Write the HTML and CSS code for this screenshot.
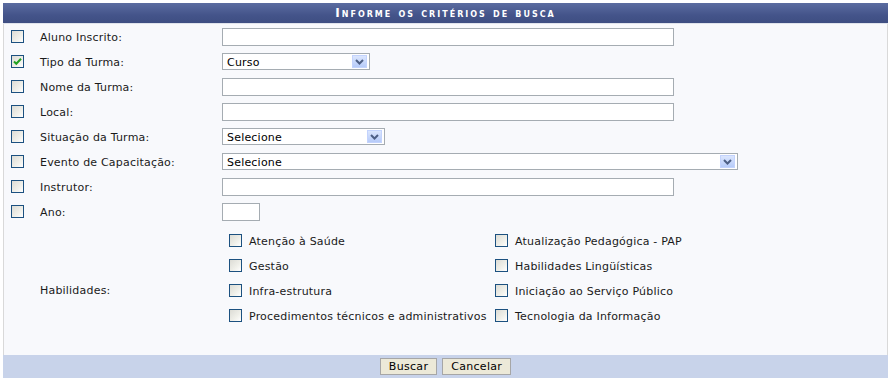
FILE: index.html
```html
<!DOCTYPE html>
<html lang="pt-BR">
<head>
<meta charset="utf-8">
<title>Informe os critérios de busca</title>
<link rel="stylesheet" href="styles.css">
</head>
<body>
<div class="panel">
  <div class="caption">Informe os critérios de busca</div>
  <div class="body">
    <div class="row">
      <span class="cb"></span><span class="lbl">Aluno Inscrito:</span>
      <div class="field"><span class="text w452"></span></div>
    </div>
    <div class="row">
      <span class="cb checked"><svg width="11" height="11" viewBox="0 0 11 11"><path d="M2 5.5 L4.3 7.8 L9 2.8" fill="none" stroke="#21a121" stroke-width="2"/></svg></span><span class="lbl">Tipo da Turma:</span>
      <div class="field"><span class="select w148"><span class="val">Curso</span><span class="arrow"><svg width="9" height="6" viewBox="0 0 9 6"><path d="M1 1 L4.5 4.5 L8 1" fill="none" stroke="#4d5f85" stroke-width="2"/></svg></span></span></div>
    </div>
    <div class="row">
      <span class="cb"></span><span class="lbl">Nome da Turma:</span>
      <div class="field"><span class="text w452"></span></div>
    </div>
    <div class="row">
      <span class="cb"></span><span class="lbl">Local:</span>
      <div class="field"><span class="text w452"></span></div>
    </div>
    <div class="row">
      <span class="cb"></span><span class="lbl">Situação da Turma:</span>
      <div class="field"><span class="select w163"><span class="val">Selecione</span><span class="arrow"><svg width="9" height="6" viewBox="0 0 9 6"><path d="M1 1 L4.5 4.5 L8 1" fill="none" stroke="#4d5f85" stroke-width="2"/></svg></span></span></div>
    </div>
    <div class="row">
      <span class="cb"></span><span class="lbl">Evento de Capacitação:</span>
      <div class="field"><span class="select w516"><span class="val">Selecione</span><span class="arrow"><svg width="9" height="6" viewBox="0 0 9 6"><path d="M1 1 L4.5 4.5 L8 1" fill="none" stroke="#4d5f85" stroke-width="2"/></svg></span></span></div>
    </div>
    <div class="row">
      <span class="cb"></span><span class="lbl">Instrutor:</span>
      <div class="field"><span class="text w452"></span></div>
    </div>
    <div class="row">
      <span class="cb"></span><span class="lbl">Ano:</span>
      <div class="field"><span class="text w38"></span></div>
    </div>
    <div class="row hab">
      <span class="cbcell"></span><span class="lbl">Habilidades:</span>
      <div class="field">
        <div class="habgrid">
          <div class="opt"><span class="cb"></span><span class="otxt">Atenção à Saúde</span></div>
          <div class="opt"><span class="cb"></span><span class="otxt">Atualização Pedagógica - PAP</span></div>
          <div class="opt"><span class="cb"></span><span class="otxt">Gestão</span></div>
          <div class="opt"><span class="cb"></span><span class="otxt">Habilidades Lingüísticas</span></div>
          <div class="opt"><span class="cb"></span><span class="otxt">Infra-estrutura</span></div>
          <div class="opt"><span class="cb"></span><span class="otxt">Iniciação ao Serviço Público</span></div>
          <div class="opt"><span class="cb"></span><span class="otxt">Procedimentos técnicos e administrativos</span></div>
          <div class="opt"><span class="cb"></span><span class="otxt">Tecnologia da Informação</span></div>
        </div>
      </div>
    </div>
  </div>
  <div class="foot">
    <button class="btn">Buscar</button>
    <button class="btn">Cancelar</button>
  </div>
</div>
</body>
</html>
```

FILE: styles.css
```css
html, body {
  margin: 0;
  padding: 0;
  background: #ffffff;
}
body {
  padding: 3px;
  font-family: "DejaVu Sans", Verdana, sans-serif;
  font-size: 11px;
  letter-spacing: 0.2px;
  color: #1a1a1a;
}
.panel {
  width: 885px;
}
.caption {
  height: 20px;
  line-height: 21px;
  text-align: center;
  color: #ffffff;
  font-weight: bold;
  font-variant: small-caps;
  letter-spacing: 2px;
  font-size: 12px;
  background: linear-gradient(#5b6ca0, #44548a 60%, #3e4e82);
  border-bottom: 1px solid #dfe3ec;
}
.body {
  background: #f8f9fc;
  border-left: 1px solid #d9d9d9;
  border-right: 1px solid #d9d9d9;
}
.row {
  display: grid;
  grid-template-columns: 36px 182px 1fr;
  height: 25px;
  align-items: center;
}
.row > .cb {
  margin-left: 7px;
}
.lbl, .otxt, .val {
  padding-top: 2px;
}
.cb {
  display: inline-flex;
  align-items: center;
  justify-content: center;
  box-sizing: border-box;
  width: 13px;
  height: 13px;
  border: 1px solid #1c5180;
  background: linear-gradient(135deg, #dcdcd5 0%, #f0f0ea 60%, #ffffff 100%);
}
.cb svg {
  display: block;
}
.field {
  display: flex;
  align-items: center;
}
.text {
  display: block;
  box-sizing: border-box;
  height: 18px;
  border: 1px solid #a5acb2;
  background: #ffffff;
}
.w452 { width: 452px; }
.w38 { width: 38px; }
.w148 { width: 148px; }
.w163 { width: 163px; }
.w516 { width: 516px; }
.select {
  display: flex;
  align-items: center;
  box-sizing: border-box;
  height: 17px;
  border: 1px solid #a5acb2;
  background: #ffffff;
  padding: 0 2px 0 4px;
}
.select .val {
  flex: 1;
  color: #000000;
  line-height: 13px;
}
.arrow {
  display: flex;
  align-items: center;
  justify-content: center;
  box-sizing: border-box;
  width: 15px;
  height: 13px;
  border: 1px solid #c3d3fd;
  background: linear-gradient(#dbe6fe, #b6cbf9);
}
.row.hab {
  height: 131px;
  align-items: center;
}
.row.hab .field {
  align-self: start;
  padding: 4px 0 0 7px;
}
.habgrid {
  display: grid;
  grid-template-columns: 266px auto;
  grid-auto-rows: 25px;
}
.opt {
  display: flex;
  align-items: center;
  gap: 7px;
}
.foot {
  height: 23px;
  background: #c8d3ea;
  display: flex;
  align-items: center;
  justify-content: center;
  gap: 5px;
}
.btn {
  font-family: "DejaVu Sans", Verdana, sans-serif;
  font-size: 11px;
  letter-spacing: 0.3px;
  color: #000000;
  height: 17px;
  padding: 1px 8px 0;
  background: #ece9d8;
  border: 1px solid #a6a6a6;
  border-radius: 0;
  line-height: 14px;
}
```
